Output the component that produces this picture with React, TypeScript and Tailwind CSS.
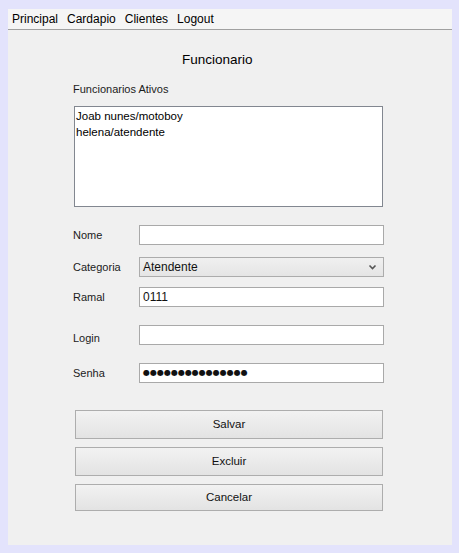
import React from "react";

const font = { fontFamily: '"Liberation Sans", Arial, sans-serif' };

function Field({ label, children, mt, labelPad = "" }: { label: string; children: React.ReactNode; mt: string; labelPad?: string }) {
  return (
    <div className={`flex items-center h-[20px] ${mt}`}>
      <div className={`w-[66px] pl-[65px] box-content text-[11px] text-[#1b1b1b] ${labelPad}`}>{label}</div>
      {children}
    </div>
  );
}

function Input({ children }: { children?: React.ReactNode }) {
  return (
    <div className="w-[245px] h-[20px] border border-[#a9a9a9] bg-white flex items-center pl-[3px] text-[12px] text-[#111]">
      {children}
    </div>
  );
}

function Btn({ label, h }: { label: string; h: string }) {
  return (
    <div
      className={`ml-[67px] w-[308px] ${h} border border-[#adadad] bg-gradient-to-b from-[#f2f2f2] to-[#e3e3e3] flex items-center justify-center text-[11.5px] text-[#111]`}
    >
      {label}
    </div>
  );
}

export default function App() {
  return (
    <div className="w-[459px] h-[553px] bg-[#e3e3fc] pl-[8px] pr-[7px] pt-[9px] pb-[8px]" style={font}>
      <div className="w-full h-full bg-[#f0f0f0] flex flex-col">
        <div className="h-[20px] bg-[#f5f5f5] border-b border-[#a0a0a0] flex items-center gap-[9px] pl-[4px] text-[12px] text-black box-content">
          <span>Principal</span>
          <span>Cardapio</span>
          <span>Clientes</span>
          <span>Logout</span>
        </div>
        <div className="mt-[22px] ml-[174px] text-[13.5px] leading-[16px] text-black">Funcionario</div>
        <div className="mt-[15px] ml-[65px] text-[11px] leading-[13px] text-[#1b1b1b]">Funcionarios Ativos</div>
        <div className="mt-[10px] ml-[66px] w-[309px] h-[101px] border border-[#828790] bg-white px-[1px] pt-[1px] text-[11.5px] leading-[16px] text-black">
          <div>Joab nunes/motoboy</div>
          <div>helena/atendente</div>
        </div>
        <Field label="Nome" mt="mt-[18px]">
          <Input />
        </Field>
        <Field label="Categoria" mt="mt-[12px]">
          <div className="w-[245px] h-[20px] border border-[#acacac] bg-gradient-to-b from-[#f0f0f0] to-[#e5e5e5] flex items-center pl-[3px] pr-[6px] text-[12px] text-[#111]">
            <span className="flex-1">Atendente</span>
            <svg width="9" height="6" viewBox="0 0 9 6">
              <path d="M1.5 1.5 L4.5 4.5 L7.5 1.5" stroke="#555" strokeWidth="1.6" fill="none" />
            </svg>
          </div>
        </Field>
        <Field label="Ramal" mt="mt-[10px]">
          <Input>0111</Input>
        </Field>
        <Field label="Login" mt="mt-[18px]" labelPad="pt-[6px]">
          <Input />
        </Field>
        <Field label="Senha" mt="mt-[18px]">
          <Input>
            <span className="tracking-[0px] text-[8px] leading-none" style={{ fontFamily: '"DejaVu Sans", sans-serif' }}>
              ●●●●●●●●●●●●●●●
            </span>
          </Input>
        </Field>
        <div className="mt-[27px] flex flex-col gap-[8px]">
          <Btn label="Salvar" h="h-[29px]" />
          <Btn label="Excluir" h="h-[29px]" />
          <Btn label="Cancelar" h="h-[27px]" />
        </div>
      </div>
    </div>
  );
}
